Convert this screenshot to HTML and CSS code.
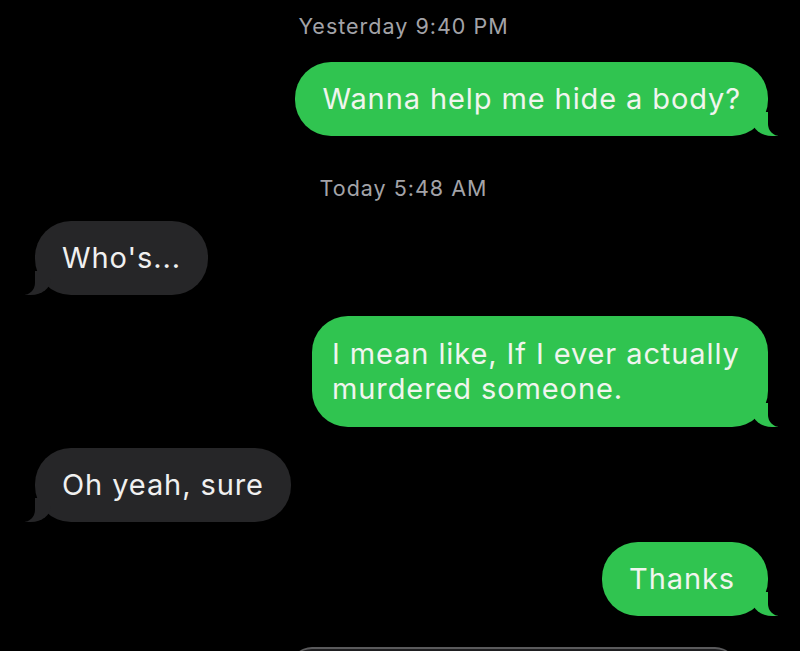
FILE: index.html
```html
<!DOCTYPE html>
<html lang="en">
<head>
<meta charset="utf-8">
<title>Messages</title>
<link rel="stylesheet" href="styles.css">
</head>
<body>
<main class="thread">
  <div class="stamp stamp-first">Yesterday 9:40 PM</div>
  <div class="bubble sent">Wanna help me hide a body?</div>
  <div class="stamp stamp-second">Today 5:48 AM</div>
  <div class="bubble recv">Who's...</div>
  <div class="bubble sent wide">I mean like, If I ever actually murdered someone.</div>
  <div class="bubble recv">Oh yeah, sure</div>
  <div class="bubble sent short-gap">Thanks</div>
  <div class="next-item"></div>
</main>
</body>
</html>
```

FILE: styles.css
```css
html, body {
  margin: 0;
  padding: 0;
  background: #000;
  height: 100%;
  overflow: hidden;
}

.thread {
  display: flex;
  flex-direction: column;
  padding: 14px 32px 0 35px;
  font-family: Inter, "Liberation Sans", Arial, sans-serif;
}

.stamp {
  align-self: center;
  color: #a3a3a8;
  font-size: 21.5px;
  letter-spacing: 1px;
  line-height: 24px;
  height: 24px;
  padding-left: 4px;
}

.stamp-second {
  margin-top: 40px;
}

.bubble {
  position: relative;
  font-size: 29px;
  letter-spacing: 0.9px;
  line-height: 35px;
  padding: 19px 27px 20px;
  border-radius: 36px;
  color: #f0f5ee;
  max-width: 440px;
  margin-top: 21px;
}

.stamp-first + .bubble {
  margin-top: 24px;
}

.sent {
  align-self: flex-end;
  background: #30c450;
}

.wide {
  width: 409px;
  padding-left: 20px;
  padding-top: 20px;
  padding-bottom: 21px;
  max-width: none;
}

.short-gap {
  margin-top: 20px;
  padding-right: 33px;
}

.recv {
  align-self: flex-start;
  background: #262628;
  color: #f0f0f0;
}

.sent::before,
.recv::before {
  content: "";
  position: absolute;
  bottom: 0;
  height: 24px;
  width: 26px;
}

.sent::before {
  right: -10px;
  background: #30c450;
  border-bottom-left-radius: 20px 16px;
}

.recv::before {
  left: -10px;
  background: #262628;
  border-bottom-right-radius: 20px 16px;
}

.sent::after,
.recv::after {
  content: "";
  position: absolute;
  bottom: 0;
  width: 26px;
  height: 24px;
  background: #000;
}

.sent::after {
  right: -26px;
  border-bottom-left-radius: 12px;
}

.recv::after {
  left: -26px;
  border-bottom-right-radius: 12px;
}

.next-item {
  align-self: flex-end;
  width: 447px;
  height: 40px;
  margin-top: 31px;
  margin-right: 31px;
  background: #1e1e20;
  border-top: 2px solid #5a5a5c;
  border-radius: 22px 22px 0 0;
}
```
